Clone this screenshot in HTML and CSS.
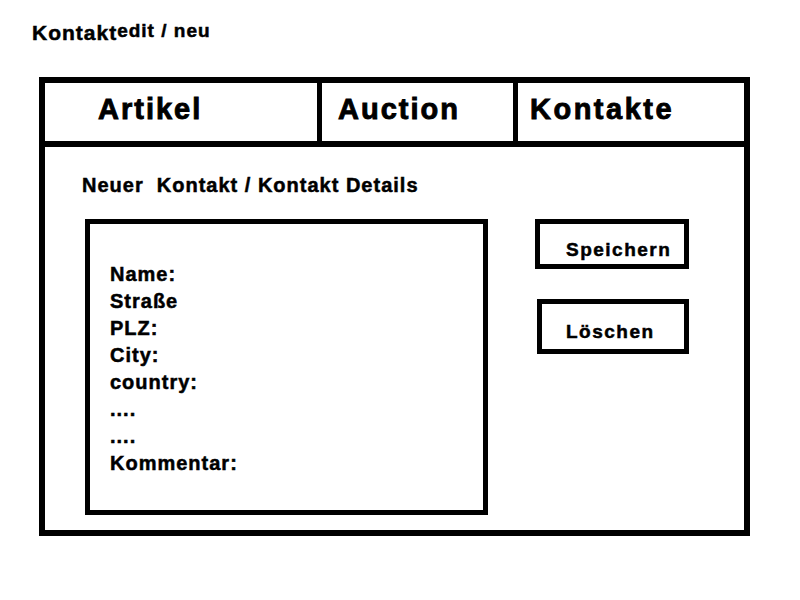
FILE: index.html
```html
<!DOCTYPE html>
<html lang="de">
<head>
    <!-- Wireframe: Kontakt bearbeiten / neu anlegen -->
    <meta charset="UTF-8">
    <meta name="viewport" content="width=device-width, initial-scale=1.0">
    <title>Kontakt edit / neu</title>
    <link rel="stylesheet" href="styles.css">
</head>
<body>
    <!-- Page title -->
    <h1 class="page-title">Kontakt<span class="page-sub">edit / neu</span></h1>

    <!-- Main window frame -->
    <div class="frame">
        <!-- Tab bar -->
        <div class="tabs">
            <div class="tab tab-artikel">Artikel</div>
            <div class="tab tab-auction">Auction</div>
            <div class="tab tab-kontakte">Kontakte</div>
        </div>

        <div class="content">
            <h2 class="section-title">Neuer&nbsp; Kontakt / Kontakt Details</h2>

            <div class="detail-row">
                <!-- Contact fields -->
                <div class="detail-box">
                    <p>Name:</p>
                    <p>Straße</p>
                    <p>PLZ:</p>
                    <p>City:</p>
                    <p>country:</p>
                    <p>....</p>
                    <p>....</p>
                    <p>Kommentar:</p>
                </div>

                <!-- Actions -->
                <div class="actions">
                    <button class="btn btn-save">Speichern</button>
                    <button class="btn btn-delete">Löschen</button>
                </div>
            </div>
        </div>
    </div>
</body>
</html>
```

FILE: styles.css
```css
/* Simple black and white sketch look */
body {
    margin: 0;
    padding: 0;
    background: #fff;
    color: #000;
    font-family: "Liberation Sans", Arial, sans-serif;
    font-weight: bold;
    -webkit-text-stroke: 0.5px #000; /* heavier strokes, like the paint sketch */
}

/* Title at the top left */
.page-title {
    margin: 0;
    height: 24px;
    padding: 21px 0 0 32px;
    font-size: 21px;
    line-height: 24px;
    letter-spacing: 1px;
}

.page-sub {
    font-size: 19px;
    line-height: 1;
    vertical-align: 3px;
}

/* Outer window */
.frame {
    margin: 32px 0 0 39px;
    width: 711px;
    height: 459px;
    box-sizing: border-box;
    border: 6px solid #000;
}

/* Tab bar */
.tabs {
    display: flex;
    border-bottom: 6px solid #000;
}

.tab {
    height: 58px;
    box-sizing: border-box;
    font-size: 29px;
    line-height: 52px;
    letter-spacing: 2px;
    -webkit-text-stroke: 0.9px #000;
}

.tab-artikel {
    width: 277px;
    padding-left: 53px;
    border-right: 5px solid #000;
}

.tab-auction {
    width: 196px;
    padding-left: 16px;
    border-right: 5px solid #000;
}

.tab-kontakte {
    flex: 1;
    padding-left: 12px;
    letter-spacing: 2.5px;
}

/* Content below the tabs */
.content {
    padding: 26px 0 0 37px;
}

.section-title {
    margin: 0;
    font-size: 20px;
    line-height: 24px;
    letter-spacing: 1px;
}

.detail-row {
    display: flex;
    align-items: flex-start;
    margin: 22px 0 0 3px;
}

.detail-box {
    width: 403px;
    height: 296px;
    box-sizing: border-box;
    border: 5px solid #000;
    padding: 37px 0 0 20px;
}

.detail-box p {
    margin: 0;
    font-size: 20px;
    line-height: 27px;
    letter-spacing: 1px;
}

/* Buttons on the right */
.actions {
    display: flex;
    flex-direction: column;
    margin-left: 47px;
}

.btn {
    display: block;
    box-sizing: border-box;
    margin: 0;
    background: #fff;
    color: #000;
    border: 5px solid #000;
    border-radius: 0;
    padding: 11px 0 0 0;
    text-align: left;
    font-family: "Liberation Sans", Arial, sans-serif;
    font-weight: bold;
    font-size: 19px;
    line-height: 24px;
    letter-spacing: 1.5px;
    -webkit-text-stroke: 0.5px #000;
    cursor: pointer;
}

.btn-save {
    width: 154px;
    height: 50px;
    padding-left: 26px;
}

.btn-delete {
    width: 152px;
    height: 55px;
    margin: 30px 0 0 2px;
    padding-left: 24px;
}
```
